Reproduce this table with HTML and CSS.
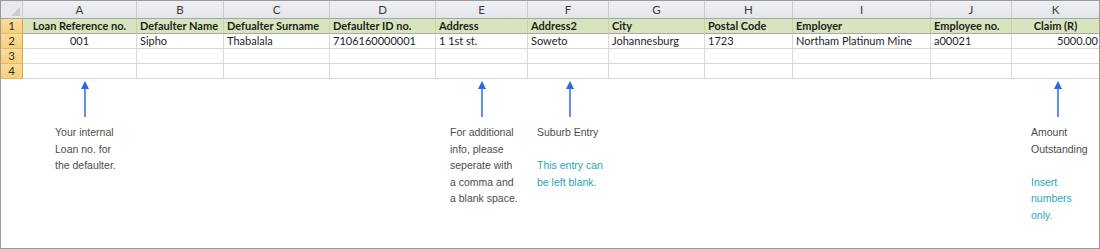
FILE: index.html
```html
<!DOCTYPE html>
<html lang="en">
<head>
<meta charset="utf-8">
<title>Loan import template</title>
<link rel="stylesheet" href="styles.css">
</head>
<body>
<div class="frame">
  <div class="sheet">
    <div class="corner"><span class="tri"></span></div>
    <div class="colh">A</div>
    <div class="colh">B</div>
    <div class="colh">C</div>
    <div class="colh">D</div>
    <div class="colh">E</div>
    <div class="colh">F</div>
    <div class="colh">G</div>
    <div class="colh">H</div>
    <div class="colh">I</div>
    <div class="colh">J</div>
    <div class="colh last">K</div>

    <div class="rowh">1</div>
    <div class="cell head center">Loan Reference no.</div>
    <div class="cell head">Defaulter Name</div>
    <div class="cell head">Defualter Surname</div>
    <div class="cell head">Defaulter ID no.</div>
    <div class="cell head">Address</div>
    <div class="cell head">Address2</div>
    <div class="cell head">City</div>
    <div class="cell head">Postal Code</div>
    <div class="cell head">Employer</div>
    <div class="cell head">Employee no.</div>
    <div class="cell head center last">Claim (R)</div>

    <div class="rowh">2</div>
    <div class="cell center">001</div>
    <div class="cell">Sipho</div>
    <div class="cell">Thabalala</div>
    <div class="cell">7106160000001</div>
    <div class="cell">1 1st st.</div>
    <div class="cell">Soweto</div>
    <div class="cell">Johannesburg</div>
    <div class="cell">1723</div>
    <div class="cell">Northam Platinum Mine</div>
    <div class="cell">a00021</div>
    <div class="cell right last">5000.00</div>

    <div class="rowh">3</div>
    <div class="cell"></div><div class="cell"></div><div class="cell"></div><div class="cell"></div><div class="cell"></div><div class="cell"></div><div class="cell"></div><div class="cell"></div><div class="cell"></div><div class="cell"></div><div class="cell last"></div>

    <div class="rowh">4</div>
    <div class="cell"></div><div class="cell"></div><div class="cell"></div><div class="cell"></div><div class="cell"></div><div class="cell"></div><div class="cell"></div><div class="cell"></div><div class="cell"></div><div class="cell"></div><div class="cell last"></div>
  </div>

  <div class="notes">
    <div class="note note-a">
      <svg class="arrow" width="10" height="36" viewBox="0 0 10 36"><polygon points="5,0 1,8 9,8"/><line x1="5" y1="7" x2="5" y2="36"/></svg>
      <p class="txt">Your internal<br>Loan no. for<br>the defaulter.</p>
    </div>
    <div class="note note-e">
      <svg class="arrow" width="10" height="36" viewBox="0 0 10 36"><polygon points="5,0 1,8 9,8"/><line x1="5" y1="7" x2="5" y2="36"/></svg>
      <p class="txt">For additional<br>info, please<br>seperate with<br>a comma and<br>a blank space.</p>
    </div>
    <div class="note note-f">
      <svg class="arrow" width="10" height="36" viewBox="0 0 10 36"><polygon points="5,0 1,8 9,8"/><line x1="5" y1="7" x2="5" y2="36"/></svg>
      <p class="txt">Suburb Entry</p>
      <p class="txt tip">This entry can<br>be left blank.</p>
    </div>
    <div class="note note-k">
      <svg class="arrow" width="10" height="36" viewBox="0 0 10 36"><polygon points="5,0 1,8 9,8"/><line x1="5" y1="7" x2="5" y2="36"/></svg>
      <p class="txt">Amount<br>Outstanding</p>
      <p class="txt tip">Insert<br>numbers<br>only.</p>
    </div>
  </div>
</div>
</body>
</html>
```

FILE: styles.css
```css
* { box-sizing: border-box; }

html, body {
  margin: 0;
  padding: 0;
  background: #ffffff;
}

.frame {
  width: 1100px;
  height: 249px;
  border: 1px solid #9a9a9a;
  background: #ffffff;
  overflow: hidden;
}

.sheet,
.notes {
  display: grid;
  grid-template-columns: 22px 114px 87px 106px 106px 92px 81px 96px 88px 138px 81px 87px;
}

.sheet {
  grid-template-rows: 18px 15px 15px 15px 15px;
  font-family: Lato, "Open Sans", sans-serif;
  font-size: 11px;
  color: #1e1e1e;
}

.corner {
  position: relative;
  background: #e6e9ed;
  border-right: 1px solid #c9ced5;
  border-bottom: 1px solid #9fa7b1;
}

.corner .tri {
  position: absolute;
  right: 2px;
  bottom: 2px;
  width: 0;
  height: 0;
  border-left: 9px solid transparent;
  border-bottom: 9px solid #c6cbd2;
}

.colh {
  background: linear-gradient(#eef0f3, #e2e6eb);
  border-right: 1px solid #c9ced5;
  border-bottom: 1px solid #9fa7b1;
  text-align: center;
  line-height: 17px;
  color: #3a3a3a;
  font-size: 11.5px;
}

.rowh {
  background: linear-gradient(#fadd9b, #f6cf78);
  border-right: 1px solid #d9a441;
  border-bottom: 1px solid #e8bb62;
  text-align: center;
  line-height: 14px;
  color: #2e2e2e;
  font-size: 11.5px;
}

.cell {
  border-right: 1px solid #d8d8d8;
  border-bottom: 1px solid #d8d8d8;
  padding: 0 3px;
  line-height: 14px;
  white-space: nowrap;
  overflow: hidden;
}

.cell.head {
  background: #d8e4bc;
  font-weight: 700;
  border-right-color: #c8d3ab;
  border-bottom-color: #a9a9a9;
}

.cell.center { text-align: center; }
.cell.right { text-align: right; padding-right: 1px; }
.last { border-right: none; }

.notes {
  font-family: "Liberation Sans", Arial, sans-serif;
  font-size: 10.5px;
  color: #4d4d4d;
}

.note {
  display: flex;
  flex-direction: column;
  align-items: flex-start;
  padding-top: 2px;
}

.arrow {
  display: block;
  margin-bottom: 7px;
}

.arrow polygon { fill: #2f64e6; }
.arrow line { stroke: #3d70ee; stroke-width: 1.6; }

.txt {
  margin: 0;
  line-height: 16.5px;
  white-space: nowrap;
}

.txt.tip {
  margin-top: 16.5px;
  color: #2aa6b4;
}

.note-a { grid-column: 2; }
.note-a .arrow { margin-left: 57px; }
.note-a .txt { margin-left: 32px; }

.note-e { grid-column: 6; }
.note-e .arrow { margin-left: 41px; }
.note-e .txt { margin-left: 14px; }

.note-f { grid-column: 7; }
.note-f .arrow { margin-left: 37px; }
.note-f .txt { margin-left: 9px; }

.note-k { grid-column: 12; }
.note-k .arrow { margin-left: 41px; }
.note-k .txt { margin-left: 19px; }
```
